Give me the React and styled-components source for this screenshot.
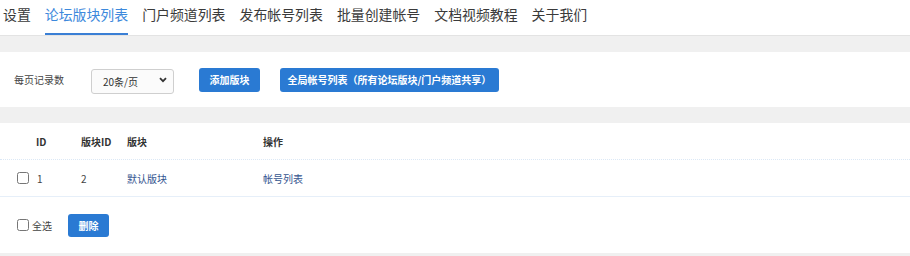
import styled, { createGlobalStyle } from "styled-components";

const GlobalStyle = createGlobalStyle`
  html, body {
    margin: 0;
    padding: 0;
    background: #ffffff;
    font-family: "Noto Sans CJK SC", "Noto Sans", "Liberation Sans", sans-serif;
    color: #333;
  }
  * { box-sizing: border-box; }
`;

const Page = styled.div`
  width: 910px;
  height: 256px;
  background: #f0f0f0;
  overflow: hidden;
`;

const Nav = styled.nav`
  display: flex;
  gap: 14px;
  padding-left: 3px;
  background: #fff;
  border-bottom: 1px solid #e3e3e3;
`;

const Tab = styled.a`
  display: block;
  font-size: 13.9px;
  line-height: 28px;
  padding-bottom: 5px;
  border-bottom: 2px solid ${(p) => (p.$active ? "#3a7fd5" : "transparent")};
  color: ${(p) => (p.$active ? "#3d89dc" : "#3a3a3a")};
  text-decoration: none;
  white-space: nowrap;
  cursor: pointer;
`;

const Panel = styled.section`
  background: #fff;
  margin-top: 16px;
`;

const Toolbar = styled.div`
  display: flex;
  align-items: center;
  height: 55px;
  padding: 0 14px;
`;

const Label = styled.span`
  font-size: 10px;
  color: #444;
  margin-right: 27px;
`;

const SelectWrap = styled.div`
  position: relative;
  width: 83px;
  height: 25px;
  margin-right: 25px;
`;

const Select = styled.select`
  appearance: none;
  width: 100%;
  height: 100%;
  border: 1px solid #cfcfcf;
  border-radius: 3px;
  background: #fbfbfb;
  padding: 0 0 0 11px;
  font-family: inherit;
  font-size: 10px;
  color: #333;
  outline: none;
`;

const Chevron = styled.svg`
  position: absolute;
  right: 7px;
  top: 10px;
  pointer-events: none;
`;

const Button = styled.button`
  height: ${(p) => p.$h || 24}px;
  padding: 0 ${(p) => p.$px || 8}px;
  border: none;
  border-radius: 3px;
  background: #2a7ad3;
  color: #fff;
  font-family: inherit;
  font-size: 10px;
  font-weight: 700;
  cursor: pointer;
  margin-right: ${(p) => p.$mr || 0}px;
  white-space: nowrap;
`;

const Grid = styled.div`
  display: grid;
  grid-template-columns: 64px 46px 136px 1fr;
  align-items: center;
  height: 37px;
  padding-left: 17px;
  font-size: 10px;
  border-bottom: ${(p) => p.$line};
`;

const Head = styled.div`
  font-weight: 700;
  color: #333;
  padding-left: ${(p) => p.$pl || 0}px;
`;

const Cell = styled.div`
  display: flex;
  align-items: center;
  color: #444;
`;

const LinkText = styled.a`
  color: #34558f;
  text-decoration: none;
  cursor: pointer;
`;

const Check = styled.input.attrs({ type: "checkbox" })`
  width: 12px;
  height: 12px;
  margin: 0 ${(p) => p.$mr || 8}px 0 0;
`;

const Footer = styled.div`
  display: flex;
  align-items: center;
  height: 56px;
  padding-left: 17px;
  font-size: 10px;
  color: #444;
`;

const CheckLabel = styled.label`
  display: flex;
  align-items: center;
  margin-right: 16px;
`;

const tabs = ["设置", "论坛版块列表", "门户频道列表", "发布帐号列表", "批量创建帐号", "文档视频教程", "关于我们"];

export default function App() {
  return (
    <Page>
      <GlobalStyle />
      <Nav>
        {tabs.map((t, i) => (
          <Tab key={t} $active={i === 1}>
            {t}
          </Tab>
        ))}
      </Nav>
      <Panel>
        <Toolbar>
          <Label>每页记录数</Label>
          <SelectWrap>
            <Select defaultValue="20">
              <option value="10">10条/页</option>
              <option value="20">20条/页</option>
              <option value="50">50条/页</option>
            </Select>
            <Chevron width="8" height="6" viewBox="0 0 8 6">
              <path d="M1 1.2 L4 4.2 L7 1.2" fill="none" stroke="#333" strokeWidth="1.8" />
            </Chevron>
          </SelectWrap>
          <Button $mr={20} $px={10.5}>添加版块</Button>
          <Button $px={7.5}>全局帐号列表（所有论坛版块/门户频道共享）</Button>
        </Toolbar>
      </Panel>
      <Panel>
        <Grid $line="1px dotted #dbe8f6">
          <Head $pl={19}>ID</Head>
          <Head>版块ID</Head>
          <Head>版块</Head>
          <Head>操作</Head>
        </Grid>
        <Grid $line="1px solid #e6eff9">
          <Cell>
            <Check $mr={8} />1
          </Cell>
          <Cell>2</Cell>
          <Cell>
            <LinkText>默认版块</LinkText>
          </Cell>
          <Cell>
            <LinkText>帐号列表</LinkText>
          </Cell>
        </Grid>
        <Footer>
          <CheckLabel>
            <Check $mr={3} />全选
          </CheckLabel>
          <Button $h={23} $px={10.5}>删除</Button>
        </Footer>
      </Panel>
    </Page>
  );
}
